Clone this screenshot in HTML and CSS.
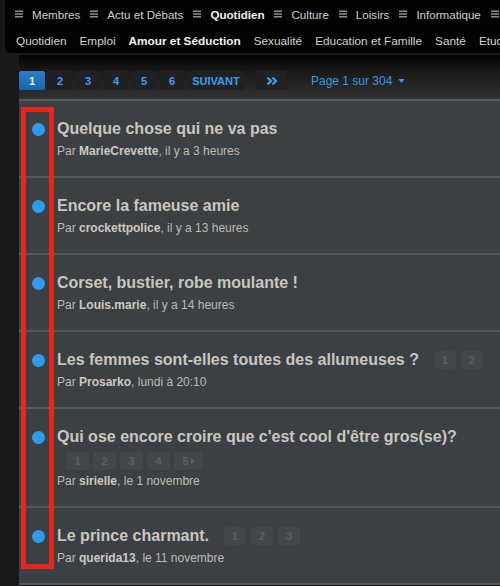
FILE: index.html
```html
<!DOCTYPE html>
<html lang="fr">
<head>
<meta charset="utf-8">
<title>Amour et Séduction</title>
<link rel="stylesheet" href="styles.css">
</head>
<body>
<div class="page">
  <nav class="topnav">
    <div class="nav-row nav-main">
      <span class="nav-item"><svg class="burger" viewBox="0 0 8 8"><rect y="0.5" width="8" height="1.4"/><rect y="3.3" width="8" height="1.4"/><rect y="6.1" width="8" height="1.4"/></svg>Membres</span>
      <span class="nav-item"><svg class="burger" viewBox="0 0 8 8"><rect y="0.5" width="8" height="1.4"/><rect y="3.3" width="8" height="1.4"/><rect y="6.1" width="8" height="1.4"/></svg>Actu et Débats</span>
      <span class="nav-item active"><svg class="burger" viewBox="0 0 8 8"><rect y="0.5" width="8" height="1.4"/><rect y="3.3" width="8" height="1.4"/><rect y="6.1" width="8" height="1.4"/></svg>Quotidien</span>
      <span class="nav-item"><svg class="burger" viewBox="0 0 8 8"><rect y="0.5" width="8" height="1.4"/><rect y="3.3" width="8" height="1.4"/><rect y="6.1" width="8" height="1.4"/></svg>Culture</span>
      <span class="nav-item"><svg class="burger" viewBox="0 0 8 8"><rect y="0.5" width="8" height="1.4"/><rect y="3.3" width="8" height="1.4"/><rect y="6.1" width="8" height="1.4"/></svg>Loisirs</span>
      <span class="nav-item"><svg class="burger" viewBox="0 0 8 8"><rect y="0.5" width="8" height="1.4"/><rect y="3.3" width="8" height="1.4"/><rect y="6.1" width="8" height="1.4"/></svg>Informatique</span>
      <span class="nav-item"><svg class="burger" viewBox="0 0 8 8"><rect y="0.5" width="8" height="1.4"/><rect y="3.3" width="8" height="1.4"/><rect y="6.1" width="8" height="1.4"/></svg></span>
    </div>
    <div class="nav-row nav-sub">
      <span class="sub-item">Quotidien</span>
      <span class="sub-item">Emploi</span>
      <span class="sub-item active">Amour et Séduction</span>
      <span class="sub-item">Sexualité</span>
      <span class="sub-item">Education et Famille</span>
      <span class="sub-item">Santé</span>
      <span class="sub-item">Etudes</span>
    </div>
  </nav>

  <div class="main">
    <div class="pagebar">
      <div class="pager">
        <span class="pbtn current">1</span>
        <span class="pbtn">2</span>
        <span class="pbtn">3</span>
        <span class="pbtn">4</span>
        <span class="pbtn">5</span>
        <span class="pbtn">6</span>
        <span class="pbtn next">SUIVANT</span>
        <span class="pbtn last"><svg viewBox="0 0 12 10" class="dchev"><path d="M1.5 1.5 L5 5 L1.5 8.5 M6.5 1.5 L10 5 L6.5 8.5"/></svg></span>
      </div>
      <span class="pageinfo">Page 1 sur 304 <svg class="caret" viewBox="0 0 8 5"><path d="M0 0 H8 L4 5 Z"/></svg></span>
    </div>

    <ul class="topics">
      <li class="topic">
        <span class="dot"></span>
        <div class="topic-body">
          <div class="title-line"><span class="title">Quelque chose qui ne va pas</span></div>
          <div class="meta">Par <b>MarieCrevette</b>, il y a 3 heures</div>
        </div>
      </li>
      <li class="topic">
        <span class="dot"></span>
        <div class="topic-body">
          <div class="title-line"><span class="title">Encore la fameuse amie</span></div>
          <div class="meta">Par <b>crockettpolice</b>, il y a 13 heures</div>
        </div>
      </li>
      <li class="topic">
        <span class="dot"></span>
        <div class="topic-body">
          <div class="title-line"><span class="title">Corset, bustier, robe moulante !</span></div>
          <div class="meta">Par <b>Louis.marie</b>, il y a 14 heures</div>
        </div>
      </li>
      <li class="topic">
        <span class="dot"></span>
        <div class="topic-body">
          <div class="title-line"><span class="title">Les femmes sont-elles toutes des allumeuses ?</span>
            <span class="mini-pages"><span class="mini">1</span><span class="mini">2</span></span>
          </div>
          <div class="meta">Par <b>Prosarko</b>, lundi à 20:10</div>
        </div>
      </li>
      <li class="topic">
        <span class="dot"></span>
        <div class="topic-body">
          <div class="title-line"><span class="title">Qui ose encore croire que c'est cool d'être gros(se)?</span></div>
          <div class="mini-pages block"><span class="mini">1</span><span class="mini">2</span><span class="mini">3</span><span class="mini">4</span><span class="mini wide">5<svg class="tri" viewBox="0 0 4 6"><path d="M0 0 L4 3 L0 6 Z"/></svg></span></div>
          <div class="meta">Par <b>sirielle</b>, le 1 novembre</div>
        </div>
      </li>
      <li class="topic">
        <span class="dot"></span>
        <div class="topic-body">
          <div class="title-line"><span class="title">Le prince charmant.</span>
            <span class="mini-pages"><span class="mini">1</span><span class="mini">2</span><span class="mini">3</span></span>
          </div>
          <div class="meta">Par <b>querida13</b>, le 11 novembre</div>
        </div>
      </li>
    </ul>
  </div>

  <div class="annotation"></div>
</div>
</body>
</html>
```

FILE: styles.css
```css
* { box-sizing: border-box; }

html, body {
  margin: 0;
  padding: 0;
  background: #171819;
  font-family: "Liberation Sans", Arial, sans-serif;
  overflow: hidden;
}

.page {
  position: relative;
  width: 500px;
  height: 586px;
  overflow: hidden;
}

/* ---------- top navigation ---------- */
.topnav {
  margin-left: 5px;
  height: 53px;
  background: #030303;
  border-bottom-left-radius: 6px;
  display: flex;
  flex-direction: column;
  white-space: nowrap;
  overflow: hidden;
}

.nav-row {
  display: flex;
  align-items: center;
  white-space: nowrap;
}

.nav-main {
  height: 28px;
  padding-left: 10px;
  gap: 10px;
  font-size: 11.6px;
  color: #cfcfcf;
}

.nav-item {
  display: inline-flex;
  align-items: center;
  gap: 9px;
}

.nav-item.active {
  font-weight: bold;
  color: #f2f2f2;
}

.burger {
  width: 8px;
  height: 8px;
  fill: #9a9a9a;
}

.nav-sub {
  height: 25px;
  padding-left: 11px;
  gap: 13px;
  font-size: 11.8px;
  color: #d2d2d2;
}

.sub-item.active {
  font-weight: bold;
  color: #f2f2f2;
}

/* ---------- main ---------- */
.main {
  margin-left: 19px;
  margin-top: 2px;
}

.pagebar {
  height: 46px;
  padding-top: 16px;
  display: flex;
  align-items: flex-start;
  background: linear-gradient(#050505 0%, #1c1c1c 45%, #303132 100%);
  border-bottom: 2px solid #595d60;
}

.pager {
  display: flex;
  gap: 2px;
}

.pbtn {
  display: inline-flex;
  align-items: center;
  justify-content: center;
  width: 26px;
  height: 19px;
  border-radius: 2px;
  background: #1f2123;
  color: #3f9ef0;
  font-size: 11px;
  font-weight: bold;
}

.pbtn.current {
  background: linear-gradient(#2a7fc8, #1766ab);
  color: #e6e6e6;
}

.pbtn.next {
  width: 58px;
}

.pbtn.last {
  width: 31px;
  margin-left: 9px;
}

.dchev {
  width: 12px;
  height: 10px;
  fill: none;
  stroke: #3f9ef0;
  stroke-width: 2.2;
}

.pageinfo {
  margin-left: 24px;
  height: 19px;
  display: inline-flex;
  align-items: center;
  gap: 6px;
  font-size: 12px;
  color: #3a97e6;
}

.caret {
  width: 7px;
  height: 4px;
  fill: #3a97e6;
}

/* ---------- topic list ---------- */
.topics {
  list-style: none;
  margin: 0;
  padding: 0;
  background: #3b4044;
}

.topic {
  display: flex;
  align-items: flex-start;
  padding: 17px 0 17px 13px;
  border-bottom: 2px solid #55595d;
}

.dot {
  flex: none;
  width: 13px;
  height: 13px;
  margin-top: 5px;
  border-radius: 50%;
  background: #2c9cf2;
}

.topic-body {
  margin-left: 12px;
  min-width: 0;
}

.title-line {
  display: flex;
  align-items: center;
  height: 22px;
  white-space: nowrap;
}

.title {
  font-size: 16px;
  font-weight: bold;
  color: #cac6be;
}

.meta {
  margin-top: 3px;
  height: 16px;
  line-height: 16px;
  font-size: 12px;
  color: #bfbbb3;
}

.meta b {
  color: #cdc9c1;
}

.mini-pages {
  display: inline-flex;
  gap: 5px;
  margin-left: 15px;
}

.mini-pages.block {
  display: flex;
  margin: 4px 0 3px 9px;
  gap: 4px;
}

.mini {
  display: inline-flex;
  align-items: center;
  justify-content: center;
  width: 22px;
  height: 18px;
  border-radius: 3px;
  background: #42474b;
  color: #5a5f63;
  font-size: 11px;
  font-weight: bold;
}

.mini-pages.block .mini {
  width: 23px;
}

.mini-pages.block .mini.wide {
  width: 29px;
  gap: 2px;
}

.tri {
  width: 4px;
  height: 6px;
  fill: #5a5f63;
}

/* ---------- red annotation box (overlay) ---------- */
.annotation {
  position: absolute;
  left: 21px;
  top: 107px;
  width: 33px;
  height: 462px;
  border: 5px solid #e6271b;
  pointer-events: none;
}
```
